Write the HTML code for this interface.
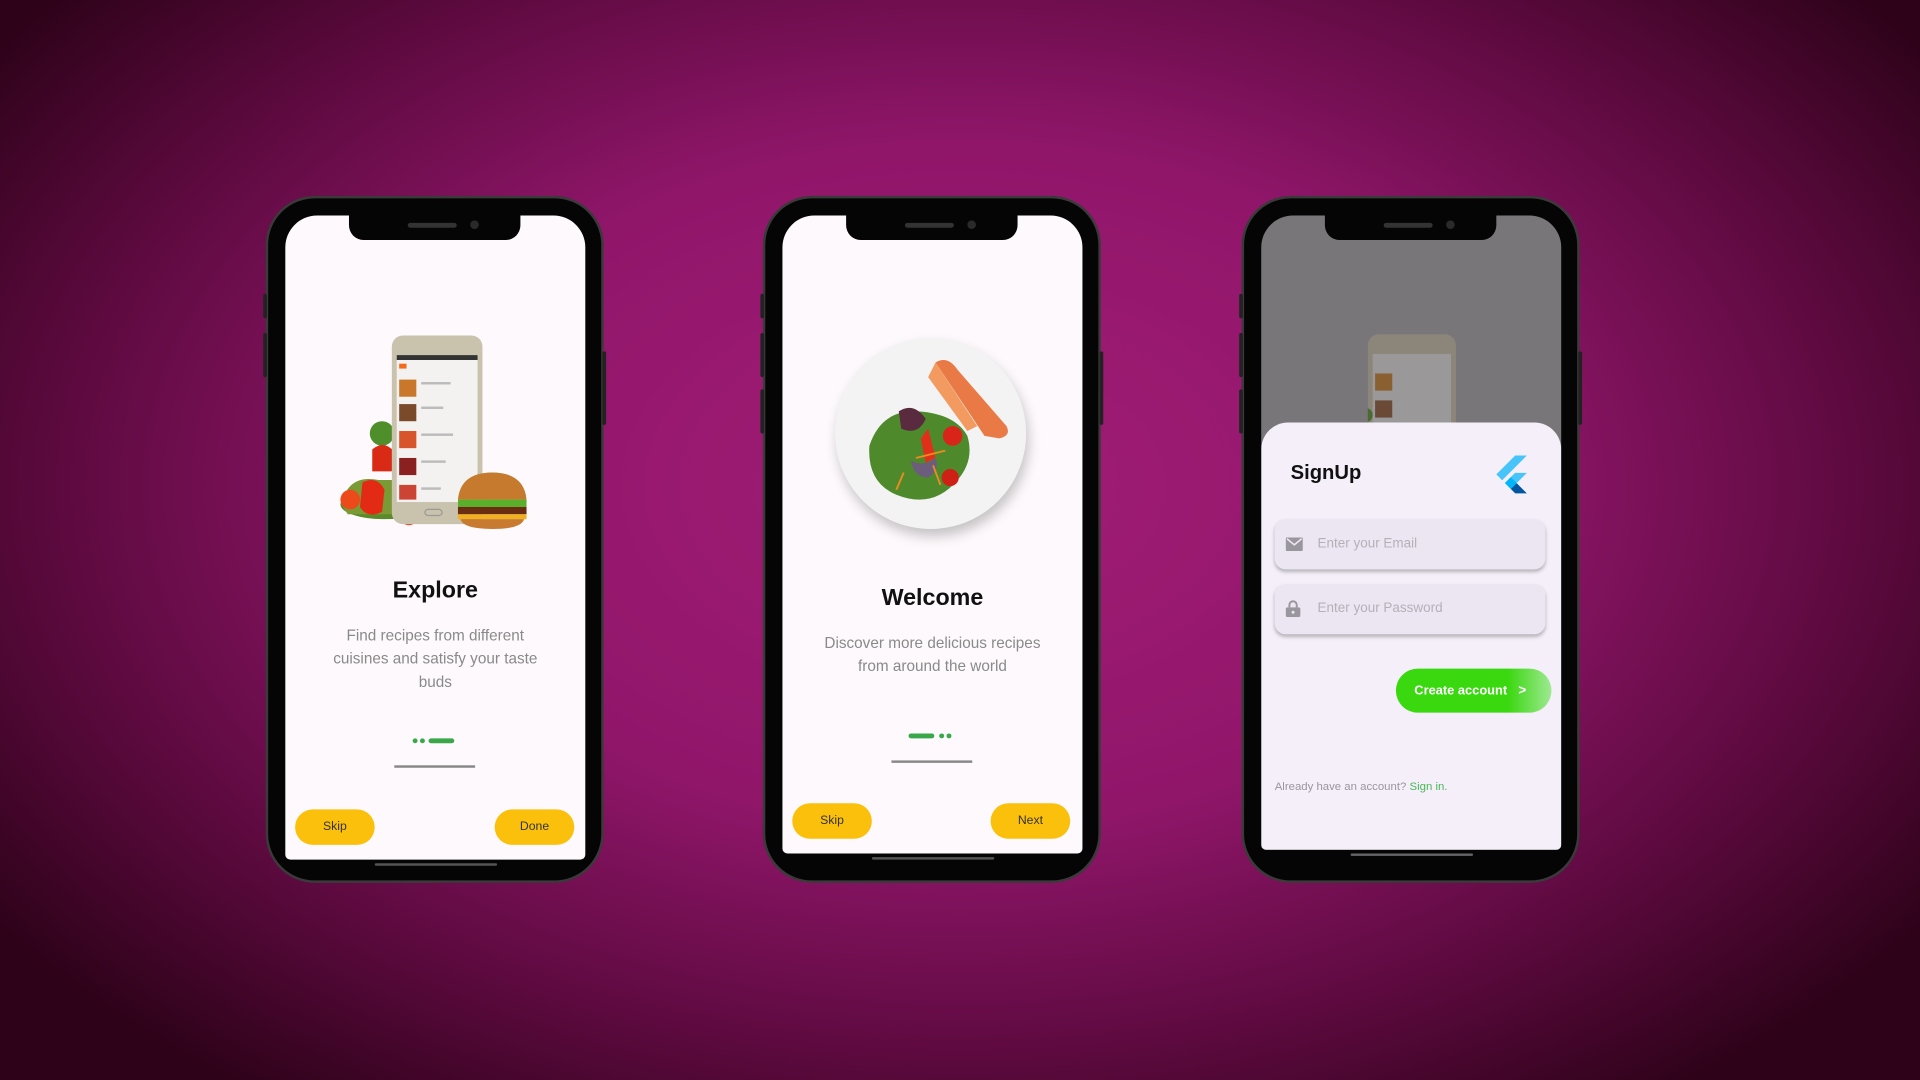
<!DOCTYPE html>
<html><head><meta charset="utf-8"><style>
*{margin:0;padding:0;box-sizing:border-box}
html,body{width:1920px;height:1080px;overflow:hidden}
body{background:radial-gradient(ellipse 62% 70% at 50% 45%,#a21d76 0%,#90166a 45%,#5e0a40 75%,#2e0219 100%);font-family:"Liberation Sans",sans-serif}
#w{position:absolute;left:0;top:0;width:1568px;height:882px;transform:scale(1.22449);transform-origin:0 0}
.a{position:absolute}
.phone{position:absolute;top:160px;width:276px;height:561px;background:#050505;border-radius:40px;border:2px solid #3a3a3a}
.scr{position:absolute;left:14px;top:14px;width:245px;height:526px;background:#fdf9fc;border-radius:26px 26px 4px 4px;overflow:hidden}
.notch{position:absolute;left:66px;top:14px;width:140px;height:20px;background:#050505;border-radius:0 0 12px 12px}
.notch:before{content:"";position:absolute;left:48px;top:6px;width:40px;height:4px;border-radius:2px;background:#333}
.notch:after{content:"";position:absolute;left:99px;top:4px;width:7px;height:7px;border-radius:50%;background:#2a2a2a}
.btn{position:absolute;height:29px;width:65px;border-radius:15px;background:#fbc00b;color:#333;font-size:10px;text-align:center;line-height:29px}
.title{position:absolute;left:0;width:245px;text-align:center;font-weight:bold;font-size:19px;color:#111}
.desc{position:absolute;text-align:center;font-size:12.5px;line-height:19px;color:#8a8a8a}
.home{position:absolute;width:100px;height:2px;background:#555;border-radius:1px}
.side{position:absolute;width:3px;background:#222;border-radius:2px}
</style></head><body><div id="w">

<!-- phone 1 -->
<div class="phone" style="left:217px">
 <div class="side" style="left:-4px;top:78px;height:20px"></div>
 <div class="side" style="left:-4px;top:110px;height:36px"></div>
 <div class="side" style="right:-4px;top:125px;height:60px"></div>
 <div class="scr">
  <svg class="a" style="left:41px;top:96px" width="160" height="162" viewBox="0 0 160 162">
   <ellipse cx="40" cy="140" rx="36" ry="12" fill="#5a8a2a"/>
   <circle cx="38" cy="82" r="10" fill="#4f8f2b"/>
   <path d="M30 95 q10 -8 18 2 l-2 16 h-16z" fill="#d92a16"/>
   <path d="M5 140 q5 -25 30 -20 l20 0 q8 20 -5 28 h-40z" fill="#7a9a35"/>
   <path d="M22 122 q12 -6 18 6 l-2 18 q-12 6 -18 -4z" fill="#e22a14"/>
   <circle cx="12" cy="136" r="8" fill="#ec4a1a"/>
   <circle cx="60" cy="150" r="7" fill="#e8451c"/>
   <rect x="46" y="2" width="74" height="154" rx="9" fill="#c9c3ad"/>
   <rect x="50" y="18" width="66" height="120" fill="#f4f2f0"/>
   <rect x="50" y="18" width="66" height="4" fill="#333"/>
   <rect x="52" y="25" width="6" height="4" fill="#f26b1d"/>
   <rect x="52" y="38" width="14" height="14" fill="#c9772a"/>
   <rect x="52" y="58" width="14" height="14" fill="#7a4a2a"/>
   <rect x="52" y="80" width="14" height="14" fill="#d8542a"/>
   <rect x="52" y="102" width="14" height="14" fill="#8a2020"/>
   <rect x="52" y="124" width="14" height="12" fill="#c43"/>
   <g fill="#bbb"><rect x="70" y="40" width="24" height="2"/><rect x="70" y="60" width="18" height="2"/><rect x="70" y="82" width="26" height="2"/><rect x="70" y="104" width="20" height="2"/><rect x="70" y="126" width="16" height="2"/></g>
   <rect x="73" y="144" width="14" height="5" rx="2.5" fill="none" stroke="#999"/>
   <ellipse cx="128" cy="122" rx="20" ry="8" fill="#4d8a2e"/>
   <path d="M100 136 q2 -22 28 -22 q26 0 28 22z" fill="#c57a2e"/>
   <rect x="100" y="136" width="56" height="6" fill="#5ab02a"/>
   <rect x="100" y="142" width="56" height="6" fill="#6a2d12"/>
   <rect x="100" y="148" width="56" height="4" fill="#f0b020"/>
   <path d="M102 152 h52 q-2 8 -26 8 q-24 0 -26 -8z" fill="#c87a30"/>
  </svg>
  <div class="title" style="top:296px">Explore</div>
  <div class="desc" style="top:334px;left:30px;width:185px">Find recipes from different cuisines and satisfy your taste buds</div>
  <div class="a" style="left:104px;top:427px;width:4px;height:4px;border-radius:2px;background:#3aa84a"></div>
  <div class="a" style="left:110px;top:427px;width:4px;height:4px;border-radius:2px;background:#3aa84a"></div>
  <div class="a" style="left:117px;top:427px;width:21px;height:4px;border-radius:2px;background:#3aa84a"></div>
  <div class="a" style="left:89px;top:449px;width:66px;height:2px;background:#888"></div>
  <div class="btn" style="left:8px;top:485px">Skip</div>
  <div class="btn" style="left:171px;top:485px">Done</div>
 </div>
 <div class="notch"></div>
 <div class="home" style="left:87px;top:543px"></div>
</div>

<!-- phone 2 -->
<div class="phone" style="left:623px">
 <div class="side" style="left:-4px;top:78px;height:20px"></div>
 <div class="side" style="left:-4px;top:110px;height:36px"></div>
 <div class="side" style="left:-4px;top:156px;height:36px"></div>
 <div class="side" style="right:-4px;top:125px;height:60px"></div>
 <div class="scr" style="height:521px">
  <div class="a" style="left:43px;top:100px;width:156px;height:156px;border-radius:50%;background:#f3f3f4;box-shadow:2px 6px 10px rgba(0,0,0,.22)"></div>
  <svg class="a" style="left:43px;top:100px" width="156" height="156" viewBox="0 0 156 156">
   <path d="M28 88 q10 -30 40 -28 q30 2 40 20 q6 20 -8 36 q-20 24 -50 12 q-24 -10 -22 -40z" fill="#4e8a2c"/>
   <path d="M52 60 q12 -8 22 6 q-6 14 -20 8z" fill="#5a2a3e"/>
   <circle cx="96" cy="80" r="8" fill="#d9241a"/>
   <circle cx="94" cy="114" r="7" fill="#cf2016"/>
   <path d="M70 82 l6 -8 6 24 -8 4z" fill="#e0301a"/>
   <path d="M62 100 q10 6 20 -2 q4 10 -6 16 q-12 0 -14 -14z" fill="#7a4aa0" opacity=".7"/>
   <path d="M82 20 q10 -6 18 6 l40 46 q4 8 -6 10 l-12 -2 z" fill="#ea7a45"/>
   <path d="M82 20 l34 52 -8 4 -32 -44z" fill="#f29a60"/>
   <g stroke="#f08a20" stroke-width="1.5"><line x1="66" y1="98" x2="90" y2="92"/><line x1="80" y1="104" x2="86" y2="120"/><line x1="56" y1="110" x2="50" y2="124"/></g>
  </svg>
  <div class="title" style="top:302px">Welcome</div>
  <div class="desc" style="top:340px;left:24px;width:197px">Discover more delicious recipes from around the world</div>
  <div class="a" style="left:103px;top:423px;width:21px;height:4px;border-radius:2px;background:#3aa84a"></div>
  <div class="a" style="left:128px;top:423px;width:4px;height:4px;border-radius:2px;background:#3aa84a"></div>
  <div class="a" style="left:134px;top:423px;width:4px;height:4px;border-radius:2px;background:#3aa84a"></div>
  <div class="a" style="left:89px;top:445px;width:66px;height:2px;background:#888"></div>
  <div class="btn" style="left:8px;top:480px">Skip</div>
  <div class="btn" style="left:170px;top:480px">Next</div>
 </div>
 <div class="notch"></div>
 <div class="home" style="left:87px;top:538px"></div>
</div>

<!-- phone 3 -->
<div class="phone" style="left:1014px">
 <div class="side" style="left:-4px;top:78px;height:20px"></div>
 <div class="side" style="left:-4px;top:110px;height:36px"></div>
 <div class="side" style="left:-4px;top:156px;height:36px"></div>
 <div class="side" style="right:-4px;top:125px;height:60px"></div>
 <div class="scr" style="height:518px;background:#79767a">
  <svg class="a" style="left:87px;top:93px" width="80" height="80" viewBox="0 0 80 80">
   <rect x="0" y="4" width="72" height="90" rx="9" fill="#8b8679"/>
   <rect x="4" y="20" width="64" height="70" fill="#9a9898"/>
   <rect x="6" y="36" width="14" height="14" fill="#8a6030"/>
   <rect x="6" y="58" width="14" height="14" fill="#6a4a36"/>
   <circle cx="-2" cy="70" r="6" fill="#4a6a34"/>
  </svg>
  <div class="a" style="left:0;top:169px;width:245px;height:360px;background:#f4eff8;border-radius:22px 22px 0 0"></div>
  <div class="a" style="left:24px;top:201px;font-size:16.5px;font-weight:bold;color:#111">SignUp</div>
  <svg class="a" style="left:192px;top:196px" width="25" height="31" viewBox="0 0 256 317">
   <polygon points="157.666 0 0 157.667 48.8 206.467 255.267 0" fill="#47c5fb"/>
   <polygon points="156.567 145.4 72.15 229.817 121.133 279.5 169.833 230.8 255.267 145.4" fill="#47c5fb"/>
   <polygon points="121.133 279.5 158.2 316.567 255.267 316.567 169.833 230.8" fill="#00569e"/>
   <polygon points="72.15 229.817 121.133 180.833 169.833 230.8 121.133 279.5" fill="#00b5f8"/>
  </svg>
  <div class="a" style="left:11px;top:248px;width:221px;height:41px;border-radius:9px;background:#ece6f2;box-shadow:0 2px 3px rgba(0,0,0,.25)">
   <svg class="a" style="left:9px;top:15px" width="14" height="11" viewBox="0 0 14 11"><rect width="14" height="11" rx="1" fill="#9a969e"/><path d="M1 1 l6 5 6 -5" stroke="#ece6f2" stroke-width="1.3" fill="none"/></svg>
   <div class="a" style="left:35px;top:14px;font-size:11px;color:#b4b0b8">Enter your Email</div>
  </div>
  <div class="a" style="left:11px;top:301px;width:221px;height:41px;border-radius:9px;background:#ece6f2;box-shadow:0 2px 3px rgba(0,0,0,.25)">
   <svg class="a" style="left:9px;top:13px" width="12" height="14" viewBox="0 0 12 14"><path d="M3 6 V4 a3 3 0 0 1 6 0 V6" stroke="#9a969e" stroke-width="1.6" fill="none"/><rect y="6" width="12" height="8" rx="1.5" fill="#9a969e"/><circle cx="6" cy="10" r="1.2" fill="#ece6f2"/></svg>
   <div class="a" style="left:35px;top:14px;font-size:11px;color:#b4b0b8">Enter your Password</div>
  </div>
  <div class="a" style="left:110px;top:370px;width:127px;height:36px;border-radius:18px;background:linear-gradient(90deg,#3ad80f 0%,#3ad80f 72%,#9fe892 100%);color:#fff;font-size:10.5px;font-weight:bold;line-height:36px;padding-left:15px">Create account<span style="position:absolute;left:100px;font-size:11px">&gt;</span></div>
  <div class="a" style="left:11px;top:461px;font-size:9.3px;color:#9a969e">Already have an account? <span style="color:#49b85a">Sign in.</span></div>
 </div>
 <div class="notch"></div>
 <div class="home" style="left:87px;top:535px;background:#666"></div>
</div>

</div></body></html>
